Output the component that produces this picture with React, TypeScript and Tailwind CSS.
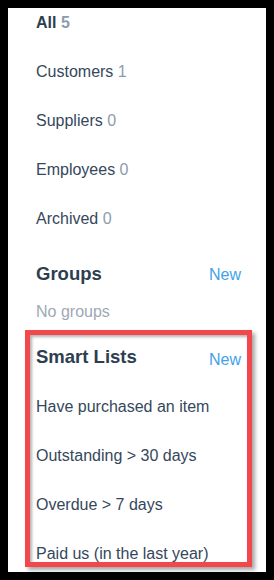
import React from 'react'

const folders = [
  { name: 'All', count: 5, active: true },
  { name: 'Customers', count: 1 },
  { name: 'Suppliers', count: 0 },
  { name: 'Employees', count: 0 },
  { name: 'Archived', count: 0 },
]

const smartLists = [
  'Have purchased an item',
  'Outstanding > 30 days',
  'Overdue > 7 days',
  'Paid us (in the last year)',
]

export default function App() {
  return (
    <div className="h-[580px] w-[274px] bg-black p-2 font-['Liberation_Sans',Arial,sans-serif]">
      <div className="relative h-full overflow-hidden bg-white pl-[28px] pr-[25px]">
        {/* contact folders */}
        <ul className="flex flex-col gap-[29px] pt-[5px] text-[16px] leading-5 text-[#35475b]">
          {folders.map((f) => (
            <li key={f.name} className={f.active ? 'font-bold text-[#2c3e50]' : ''}>
              {f.name} <span className="text-[#8d9cad]">{f.count}</span>
            </li>
          ))}
        </ul>

        {/* groups */}
        <div className="mt-[33px] flex h-6 items-baseline justify-between">
          <h2 className="text-[18.5px] font-bold leading-6 text-[#2c3e50]">Groups</h2>
          <a className="text-[16px] text-[#3fa2ea]">New</a>
        </div>
        <p className="mt-[16px] text-[16px] leading-5 text-[#9ea8b4]">No groups</p>

        {/* smart lists */}
        <div className="mt-[23px] flex h-6 items-baseline justify-between">
          <h2 className="text-[18.5px] font-bold leading-6 text-[#2c3e50]">Smart Lists</h2>
          <a className="relative top-[2px] text-[16px] text-[#3fa2ea]">New</a>
        </div>
        <ul className="mt-[28px] flex flex-col gap-[29px] text-[16px] leading-5 text-[#35475b]">
          {smartLists.map((s) => (
            <li key={s}>{s}</li>
          ))}
        </ul>

        {/* annotation highlight */}
        <div className="pointer-events-none absolute left-[17px] top-[322px] h-[237px] w-[227px] border-[5px] border-[#f2474b] shadow-[3px_3px_4px_rgba(0,0,0,0.35),inset_2px_2px_3px_rgba(0,0,0,0.3)]" />
      </div>
    </div>
  )
}
